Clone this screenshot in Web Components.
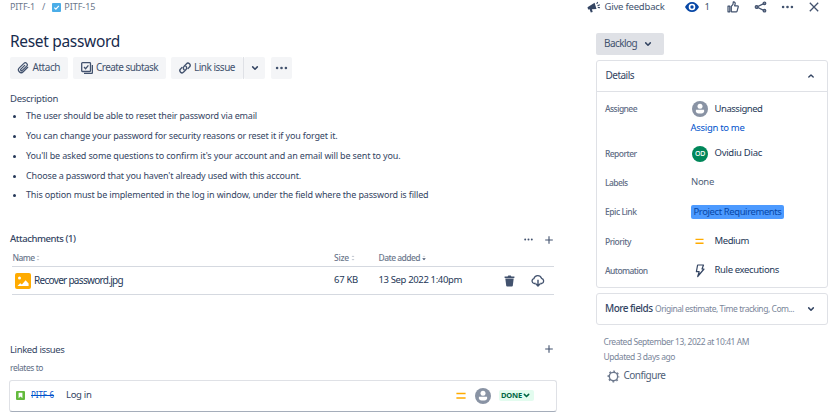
<!DOCTYPE html>
<html lang="en"><head><meta charset="utf-8"><title>Reset password</title>
<style>body{margin:0;background:#fff;overflow:hidden}</style></head><body>
<issue-view></issue-view>
<script>
const ICONS={
 check:['0 0 10 10','<rect width="10" height="10" rx="1" fill="#4bade8"/><path d="M2.6 5.2l1.7 1.7 3.3-3.8" fill="none" stroke="#fff" stroke-width="1.3"/>'],
 clip:['0 0 12 12','<path d="M10.7 5.3L6.2 9.8a2.7 2.7 0 0 1-3.9-3.9l4.6-4.5a1.9 1.9 0 0 1 2.8 2.7L5.3 8.4a.9.9 0 0 1-1.4-1.3l3.8-3.7" fill="none" stroke="#42526e" stroke-width="1.25" stroke-linecap="round"/>'],
 subtask:['0 0 12 12','<rect x=".7" y=".7" width="8.8" height="8.8" rx=".8" fill="none" stroke="#42526e" stroke-width="1.3"/><path d="M3 5l1.6 1.7L7.4 3.4M11.4 3v7.4a1 1 0 0 1-1 1H3" fill="none" stroke="#42526e" stroke-width="1.3"/>'],
 link:['0 0 12 12','<g fill="none" stroke="#42526e" stroke-width="1.4" stroke-linecap="round"><path d="M5.1 7.7c-1.1-1-1-2.4-.1-3.2l2.4-2.6a2.1 2.1 0 0 1 3.1 3L9 6.6"/><path d="M6.9 4.3c1.1 1 1 2.4.1 3.2L4.6 10.1a2.1 2.1 0 0 1-3.1-3L3 5.4"/></g>'],
 down:['0 0 8 8','<path d="M1.7 2.9L4 5.2l2.3-2.3" fill="none" stroke="#344563" stroke-width="1.5" stroke-linecap="round" stroke-linejoin="round"/>'],
 up:['0 0 8 8','<path d="M1.8 5.1L4 3l2.2 2.1" fill="none" stroke="#344563" stroke-width="1.4" stroke-linecap="round" stroke-linejoin="round"/>'],
 dgreen:['0 0 8 8','<path d="M1.5 2.7L4 5.2l2.5-2.5" fill="none" stroke="#006644" stroke-width="1.7" stroke-linecap="round"/>'],
 dots:['0 0 12 4','<g fill="#42526e"><circle cx="1.6" cy="2" r="1.3"/><circle cx="6" cy="2" r="1.3"/><circle cx="10.4" cy="2" r="1.3"/></g>'],
 plus:['0 0 8 8','<path d="M4 .2v7.600M.2 4h7.600" stroke="#42526e" stroke-width="1.1"/>'],
 mega:['0 0 14 13','<path d="M.5 6.300L7.600 1.700l1.900 6.300-4.600.2.800 2.900-1.900.5-1.200-3.300-1.500.2z" fill="#344563"/><path d="M9.700 3l1-1.900M10.500 4.700l2.300-1M10.800 6.400l2.200.3" stroke="#344563" stroke-width="1.1"/>'],
 eye:['0 0 14 10','<path d="M0 5C1.500 2 4 0 7 0s5.500 2 7 5c-1.500 3-4 5-7 5S1.500 8 0 5z" fill="#0747a6"/><circle cx="7" cy="5" r="2.500" fill="none" stroke="#fff" stroke-width="1.6"/>'],
 thumb:['0 0 12 12','<path d="M1 5.200h1.800v5.600H1zM4.300 10.600V5.400L6 3.300l.3-2.400c1.700-.2 2.100 1 1.800 2.100l-.5 1.800h2.800c.8 0 1 .5.800 1.200L10 10.300c-.1.400-.4.600-.9.600H5z" fill="none" stroke="#42526e" stroke-width="1.2" stroke-linejoin="round"/>'],
 share:['0 0 12 12','<path d="M10 2.300L2.300 6 10 9.700" fill="none" stroke="#42526e" stroke-width="1.2"/><g fill="#8993a4" stroke="#42526e" stroke-width="1.2"><circle cx="10" cy="2.300" r="1.300"/><circle cx="2.100" cy="6" r="1.400"/><circle cx="10" cy="9.700" r="1.300"/></g>'],
 close:['0 0 10 10','<path d="M.8.8l8.400 8.400M9.200.8L.8 9.200" stroke="#42526e" stroke-width="1.3"/>'],
 sort:['0 0 4 6','<path d="M.5 2L2 .5 3.500 2zM.5 4L2 5.500 3.500 4z" fill="#c1c7d0"/>'],
 sorted:['0 0 4 6','<path d="M.9 1.400h2.200" stroke="#b3bac5" stroke-width=".6"/><path d="M.2 3.300h3.600L2 5.200z" fill="#42526e"/>'],
 image:['0 0 16 16','<rect width="16" height="16" rx="2" fill="#ffab00"/><circle cx="4.500" cy="5" r="1.500" fill="#fff"/><path d="M2.500 13l2.700-2.800 1.700 1.300 3.700-4.200 3 3.100V13z" fill="#fff"/>'],
 trash:['0 0 11 12','<path d="M.6 1.500h3L4.300.6h2.400l.7.900h3v1.600H.6z" fill="#42526e"/><path d="M1.300 3.500h8.400l-.9 7.300c-.1.500-.4.800-.9.800H3.100c-.5 0-.8-.3-.9-.8z" fill="#42526e"/>'],
 cloud:['0 0 14 12','<path d="M4.700 8.500H3.300a2.500 2.500 0 0 1-.4-4.900 4 4 0 0 1 7.600-.3 2.700 2.700 0 0 1 .3 5.200H9.300" fill="none" stroke="#42526e" stroke-width="1.3"/><path d="M7 4.800v6M4.800 8.800L7 11l2.200-2.200" fill="none" stroke="#42526e" stroke-width="1.4"/>'],
 story:['0 0 9 9','<rect width="9" height="9" rx="1" fill="#63ba3c"/><path d="M2.600 1.800h3.800v5.500L4.500 5.500 2.600 7.300z" fill="#fff"/>'],
 medium:['0 0 10 8','<path d="M.4 1.600h9.200M.4 6h9.200" stroke="#ffab00" stroke-width="1.5"/>'],
 user:['0 0 16 16','<circle cx="8" cy="8" r="8" fill="#8993a4"/><circle cx="8" cy="5.300" r="2.500" fill="#fff"/><path d="M3.900 8.700h8.200v1.500A2.700 2.700 0 0 1 9.500 12.600h-3A2.700 2.700 0 0 1 3.900 10.200z" fill="#fff"/>'],
 bolt:['0 0 10 14','<path d="M2.600 1h5.900L7 5h2L2.700 12.500l1.500-4.800H1.400z" fill="none" stroke="#344563" stroke-width="1.2" stroke-linejoin="round"/>'],
 gear:['0 0 14 14','<circle cx="7" cy="7" r="4.500" fill="none" stroke="#6b778c" stroke-width="1.5"/><circle cx="7" cy="7" r="5.700" fill="none" stroke="#6b778c" stroke-width="1.4" stroke-dasharray="2 2.477" stroke-dashoffset="1"/>']
};
/* <ui-icon name w h>: an inline vector icon */
customElements.define('ui-icon',class extends HTMLElement{connectedCallback(){
 const [vb,body]=ICONS[this.getAttribute('name')],w=this.getAttribute('w'),h=this.getAttribute('h')||w;
 this.attachShadow({mode:'open'}).innerHTML=`<style>:host{display:inline-flex;flex:none}svg{display:block}</style><svg width="${w}" height="${h}" viewBox="${vb}">${body}</svg>`;
}});
/* <ui-text s w>: one line of text of size s, tracked to the width w; "struck" draws a line through it */
customElements.define('ui-text',class extends HTMLElement{connectedCallback(){
 const s=this.getAttribute('s')||10,w=+this.getAttribute('w'),c=this.getAttribute('c')||'inherit',k=this.getAttribute('k')||400;
 this.attachShadow({mode:'open'}).innerHTML=`<style>:host{display:inline-block;flex:none;white-space:nowrap;font-size:${s}px;font-weight:${k};color:${c};line-height:1.36}span{display:block;width:max-content}:host([struck]) span{text-decoration:line-through;text-decoration-thickness:1px}</style><span><slot></slot></span>`;
 if(w){const e=this.shadowRoot.querySelector('span'),n=this.textContent.length;
  e.style.letterSpacing=(w-e.getBoundingClientRect().width)/n+'px';this.style.width=w+'px';}
}});
/* <ui-row h>: fixed height horizontal row, contents centred */
customElements.define('ui-row',class extends HTMLElement{connectedCallback(){
 const g=n=>this.getAttribute(n);
 this.attachShadow({mode:'open'}).innerHTML=`<style>:host{display:flex;align-items:center;box-sizing:border-box;flex:none;height:${g('h')}px;padding-left:${g('pl')||0}px}</style><slot></slot>`;
}});
customElements.define('ui-gap',class extends HTMLElement{connectedCallback(){
 this.attachShadow({mode:'open'}).innerHTML=`<style>:host{display:block;flex:none;width:${this.getAttribute('w')||1}px;height:${this.getAttribute('h')||1}px}</style>`;
}});
/* <ui-button w bg>: flat button */
customElements.define('ui-button',class extends HTMLElement{connectedCallback(){
 this.attachShadow({mode:'open'}).innerHTML=`<style>:host{display:flex;align-items:center;box-sizing:border-box;flex:none;height:22px;width:${this.getAttribute('w')}px;padding-left:${this.getAttribute('pl')}px;background:${this.getAttribute('bg')||'#f4f5f7'};border-radius:2px;color:#42526e}</style><slot></slot>`;
}});
customElements.define('ui-panel',class extends HTMLElement{connectedCallback(){
 this.attachShadow({mode:'open'}).innerHTML=`<style>:host{display:block;box-sizing:border-box;height:${this.getAttribute('h')}px;border:1px solid #dfe1e6;border-radius:3px}</style><slot></slot>`;
}});
/* <issue-field>: label column beside its value */
customElements.define('issue-field',class extends HTMLElement{connectedCallback(){
 const g=n=>this.getAttribute(n);
 this.attachShadow({mode:'open'}).innerHTML=`<style>:host{display:grid;grid-template-columns:86px 1fr;align-items:center;height:${g('h')}px;padding-left:8px}div{display:flex;align-items:center}</style><ui-text s="8.5" w="${g('lw')}" c="#5e6c84" k="500">${g('label')}</ui-text><div><slot></slot></div>`;
}});
customElements.define('issue-bullets',class extends HTMLElement{connectedCallback(){
 const l=[['The user should be able to reset their password via email',231],['You can change your password for security reasons or reset it if you forget it.',311.5],["You'll be asked some questions to confirm it's your account and an email will be sent to you.",374.5],["Choose a password that you haven't already used with this account.",275],['This option must be implemented in the log in window, under the field where the password is filled',402.5]];
 this.attachShadow({mode:'open'}).innerHTML=`<style>:host{display:block;color:#344563}ul{list-style:none;margin:0;padding:0}li{display:flex;align-items:center;height:19.75px;padding-left:3px}i{width:3px;height:3px;border-radius:50%;background:#253858;margin:1px 10px 0 0}</style><ul>${l.map(([t,w])=>`<li><i></i><ui-text s="9" w="${w}">${t}</ui-text></li>`).join('')}</ul>`;
}});
customElements.define('issue-main',class extends HTMLElement{connectedCallback(){
 this.attachShadow({mode:'open'}).innerHTML=`<style>:host{display:block;width:557px;box-sizing:border-box;padding-left:10px}
 .card{box-sizing:border-box;margin-left:-1px;border:1px solid #dfe1e6;border-bottom-color:#a5adba;border-radius:3px;height:32px;width:548px}
 .tbl{margin-left:2px;width:542px}.r{border-bottom:1px solid #d5d9e0}.vd{width:1px;height:22px;background:#dfe1e6}
 .done{display:flex;align-items:center;height:11px;width:33px;padding-left:2px;background:#e3fcef;border-radius:2px}</style>
 <ui-row h="15"><ui-text s="9" w="25" c="#6b778c">PITF-1</ui-text><ui-gap w="7"></ui-gap><ui-text s="9" c="#6b778c">/</ui-text><ui-gap w="6.5"></ui-gap><ui-icon name="check" w="9"></ui-icon><ui-gap w="3.5"></ui-gap><ui-text s="9" w="31" c="#6b778c">PITF-15</ui-text></ui-row>
 <ui-gap h="14"></ui-gap>
 <ui-row h="26"><ui-text s="15.5" w="110" c="#172b4d">Reset password</ui-text></ui-row>
 <ui-gap h="2"></ui-gap>
 <ui-row h="22"><ui-button w="58" pl="7"><ui-icon name="clip" w="12"></ui-icon><ui-gap w="3.5"></ui-gap><ui-text s="10" w="27.5">Attach</ui-text></ui-button><ui-gap w="5"></ui-gap>
 <ui-button w="93" pl="8"><ui-icon name="subtask" w="12"></ui-icon><ui-gap w="3"></ui-gap><ui-text s="10" w="62">Create subtask</ui-text></ui-button><ui-gap w="5"></ui-gap>
 <ui-button w="72" pl="8"><ui-icon name="link" w="12"></ui-icon><ui-gap w="3"></ui-gap><ui-text s="10" w="41">Link issue</ui-text></ui-button><div class="vd"></div><ui-button w="21" pl="7"><ui-icon name="down" w="8"></ui-icon></ui-button><ui-gap w="6"></ui-gap><ui-button w="21" pl="4"><ui-icon name="dots" w="13" h="4"></ui-icon></ui-button></ui-row>
 <ui-gap h="13"></ui-gap>
 <ui-row h="14.5"><ui-text s="9.5" w="48" c="#344563">Description</ui-text></ui-row>
 <issue-bullets></issue-bullets>
 <ui-gap h="26.75"></ui-gap>
 <ui-row h="15"><ui-text s="9.5" w="65.5" c="#344563" k="500">Attachments (1)</ui-text><ui-gap w="448.5"></ui-gap><ui-icon name="dots" w="9" h="3"></ui-icon><ui-gap w="11.5"></ui-gap><ui-icon name="plus" w="8"></ui-icon></ui-row>
 <ui-gap h="2"></ui-gap>
 <div class="tbl"><ui-row h="18" class="r" pl=".5"><ui-text s="8.5" w="22" c="#6b778c" k="500">Name</ui-text><ui-gap w="1"></ui-gap><ui-icon name="sort" w="4" h="6"></ui-icon><ui-gap w="294.5"></ui-gap><ui-text s="8.5" w="15" c="#6b778c" k="500">Size</ui-text><ui-gap w="1.5"></ui-gap><ui-icon name="sort" w="4" h="6"></ui-icon><ui-gap w="24"></ui-gap><ui-text s="8.5" w="41.5" c="#6b778c" k="500">Date added</ui-text><ui-gap w="2"></ui-gap><ui-icon name="sorted" w="4" h="6"></ui-icon></ui-row>
 <ui-row h="28" class="r" pl="3"><ui-icon name="image" w="16"></ui-icon><ui-gap w="3"></ui-gap><ui-text s="10" w="89" c="#253858">Recover password.jpg</ui-text><ui-gap w="211"></ui-gap><ui-text s="9.5" w="24" c="#253858">67 KB</ui-text><ui-gap w="20.5"></ui-gap><ui-text s="9.5" w="83.5" c="#253858">13 Sep 2022 1:40pm</ui-text><ui-gap w="41.5"></ui-gap><ui-icon name="trash" w="11" h="12"></ui-icon><ui-gap w="16.5"></ui-gap><ui-icon name="cloud" w="14" h="12"></ui-icon></ui-row></div>
 <ui-gap h="47.5"></ui-gap>
 <ui-row h="15"><ui-text s="9.5" w="54.5" c="#344563">Linked issues</ui-text><ui-gap w="480"></ui-gap><ui-icon name="plus" w="8" style="margin-top:-2px"></ui-icon></ui-row>
 <ui-gap h="3.5"></ui-gap><ui-row h="13"><ui-text s="8.5" w="33" c="#5e6c84">relates to</ui-text></ui-row><ui-gap h="5.5"></ui-gap>
 <div class="card"><ui-row h="30" pl="6"><ui-icon name="story" w="9"></ui-icon><ui-gap w="6"></ui-gap><ui-text struck s="8" w="23" c="#0052cc">PITF-6</ui-text><ui-gap w="12"></ui-gap><ui-text s="9.5" w="25.5" c="#344563">Log in</ui-text><ui-gap w="364"></ui-gap><ui-icon name="medium" w="10" h="8"></ui-icon><ui-gap w="9"></ui-gap><ui-icon name="user" w="16"></ui-icon><ui-gap w="8.5"></ui-gap><div class="done"><ui-text s="7.5" w="21" c="#006644" k="700">DONE</ui-text><ui-gap w="1"></ui-gap><ui-icon name="dgreen" w="7"></ui-icon></div></ui-row></div>`;
}});
customElements.define('issue-side',class extends HTMLElement{connectedCallback(){
 this.attachShadow({mode:'open'}).innerHTML=`<style>:host{display:block;width:232px}.hd{border-bottom:1px solid #dfe1e6}
 .av{width:16px;height:16px;border-radius:50%;background:#00875a;display:flex;align-items:center;justify-content:center}
 .epic{display:flex;align-items:center;width:90.5px;height:14px;padding-left:2.5px;background:#4c9aff;border-radius:2px}</style>
 <ui-row h="14" style="margin-left:-9px"><ui-icon name="mega" w="14" h="13"></ui-icon><ui-gap w="3.5"></ui-gap><ui-text s="9.5" w="60" c="#42526e">Give feedback</ui-text><ui-gap w="20.5"></ui-gap><ui-icon name="eye" w="14" h="10"></ui-icon><ui-gap w="5.5"></ui-gap><ui-text s="9.5" w="5" c="#42526e">1</ui-text><ui-gap w="17.5"></ui-gap><ui-icon name="thumb" w="12"></ui-icon><ui-gap w="15"></ui-gap><ui-icon name="share" w="13" h="12"></ui-icon><ui-gap w="14"></ui-gap><ui-icon name="dots" w="13" h="4"></ui-icon><ui-gap w="14.5"></ui-gap><ui-icon name="close" w="10"></ui-icon></ui-row>
 <ui-gap h="19"></ui-gap>
 <ui-button w="68" pl="8" bg="#dfe1e6"><ui-text s="10" w="33">Backlog</ui-text><ui-gap w="7"></ui-gap><ui-icon name="down" w="8"></ui-icon></ui-button>
 <ui-gap h="5"></ui-gap>
 <ui-panel h="228"><ui-row h="31" pl="8.5" class="hd"><ui-text s="10" w="28.5" c="#344563">Details</ui-text><ui-gap w="173"></ui-gap><ui-icon name="up" w="8"></ui-icon></ui-row>
 <ui-gap h="5"></ui-gap>
 <issue-field h="24" label="Assignee" lw="32"><ui-gap w="1"></ui-gap><ui-icon name="user" w="16"></ui-icon><ui-gap w="6.5"></ui-gap><ui-text s="9.5" w="48" c="#253858">Unassigned</ui-text></issue-field>
 <ui-row h="15" pl="93.5"><ui-text s="9.5" w="54" c="#0052cc">Assign to me</ui-text></ui-row>
 <ui-gap h="3.5"></ui-gap>
 <issue-field h="28.5" label="Reporter" lw="31.5"><ui-gap w="1"></ui-gap><div class="av"><ui-text s="7" w="10" c="#fff" k="500">OD</ui-text></div><ui-gap w="6.5"></ui-gap><ui-text s="9.5" w="47.5" c="#253858">Ovidiu Diac</ui-text></issue-field>
 <issue-field h="29" label="Labels" lw="22.5"><ui-text s="9.5" w="23" c="#505f79">None</ui-text></issue-field>
 <issue-field h="30" label="Epic Link" lw="31.5"><div class="epic"><ui-text s="9.5" w="88" c="#0747a6">Project Requirements</ui-text></div></issue-field>
 <issue-field h="29" label="Priority" lw="26"><ui-gap w="4"></ui-gap><ui-icon name="medium" w="9" h="7"></ui-icon><ui-gap w="10.5"></ui-gap><ui-text s="9.5" w="34.5" c="#253858">Medium</ui-text></issue-field>
 <issue-field h="29" label="Automation" lw="42.5"><ui-gap w="4"></ui-gap><ui-icon name="bolt" w="10" h="14"></ui-icon><ui-gap w="9.5"></ui-gap><ui-text s="9.5" w="64.5" c="#253858">Rule executions</ui-text></issue-field></ui-panel>
 <ui-gap h="5"></ui-gap>
 <ui-panel h="32"><ui-row h="30" pl="8"><ui-text s="10" w="47.5" c="#344563" k="500">More fields</ui-text><ui-gap w="2.5"></ui-gap><ui-text s="8.5" w="139" c="#7a869a">Original estimate, Time tracking, Com...</ui-text><ui-gap w="13"></ui-gap><ui-icon name="down" w="8"></ui-icon></ui-row></ui-panel>
 <ui-gap h="9.5"></ui-gap>
 <ui-row h="15" pl="7.5"><ui-text s="8.5" w="145.5" c="#7a869a">Created September 13, 2022 at 10:41 AM</ui-text></ui-row>
 <ui-row h="15" pl="7.5"><ui-text s="8.5" w="71.5" c="#7a869a">Updated 3 days ago</ui-text></ui-row>
 <ui-gap h="2.5"></ui-gap>
 <ui-row h="18" pl="10.5"><ui-icon name="gear" w="13"></ui-icon><ui-gap w="4"></ui-gap><ui-text s="10" w="42" c="#505f79">Configure</ui-text></ui-row>`;
}});
customElements.define('issue-view',class extends HTMLElement{connectedCallback(){
 this.attachShadow({mode:'open'}).innerHTML=`<style>:host{display:flex;gap:39px;width:834px;height:419px;font-family:"Noto Sans","Open Sans",sans-serif}</style><issue-main></issue-main><issue-side></issue-side>`;
}});
</script></body></html>
